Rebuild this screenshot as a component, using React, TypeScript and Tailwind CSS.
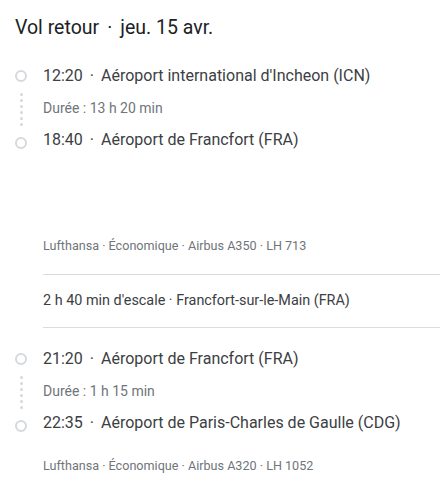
const font = { fontFamily: 'Roboto, "Noto Sans", sans-serif' };

function Circle() {
    return <div className="h-[12px] w-[12px] rounded-full border-2 border-[#d5d8dc]" />;
}

function Dots() {
    return (
        <div className="flex flex-col items-center gap-[3px] py-[5px]">
            {[0, 1, 2, 3, 4, 5].map((i) => (
                <div key={i} className="h-[3px] w-[3px] rounded-full bg-[#d5d8dc]" />
            ))}
        </div>
    );
}

type Leg = {
    depTime: string;
    depAirport: string;
    duration: string;
    arrTime: string;
    arrAirport: string;
    info: string;
    infoGap: string;
};

function Segment({ leg }: { leg: Leg }) {
    return (
        <div>
            <div className="flex">
                <div className="flex w-[28px] flex-col items-start">
                    <div className="flex h-6 items-center">
                        <Circle />
                    </div>
                    <div className="flex w-[12px] flex-1 justify-center">
                        <Dots />
                    </div>
                    <div className="flex h-6 items-center">
                        <Circle />
                    </div>
                </div>
                <div className="flex flex-col">
                    <div className="h-6 text-base leading-6 text-[#3c4043]">
                        {leg.depTime}
                        <span className="px-[7px]">·</span>
                        {leg.depAirport}
                    </div>
                    <div className="my-[10px] h-5 text-sm leading-5 text-[#70757a]">{leg.duration}</div>
                    <div className="h-6 text-base leading-6 text-[#3c4043]">
                        {leg.arrTime}
                        <span className="px-[7px]">·</span>
                        {leg.arrAirport}
                    </div>
                </div>
            </div>
            <div className={`pl-[28px] text-[12.6px] leading-4 text-[#70757a] ${leg.infoGap}`}>{leg.info}</div>
        </div>
    );
}

export default function App() {
    return (
        <div className="h-[481px] w-[440px] overflow-hidden bg-white pl-[15px]" style={font}>
            <h1 className="pt-[14px] text-[19.5px] leading-7 text-[#202124]">
                Vol retour<span className="px-[8px]">·</span>jeu. 15 avr.
            </h1>
            <div className="mt-[22px]">
                <Segment
                    leg={{
                        depTime: '12:20',
                        depAirport: "Aéroport international d'Incheon (ICN)",
                        duration: 'Durée : 13 h 20 min',
                        arrTime: '18:40',
                        arrAirport: 'Aéroport de Francfort (FRA)',
                        info: 'Lufthansa · Économique · Airbus A350 · LH 713',
                        infoGap: 'mt-[83px]',
                    }}
                />
            </div>
            <div className="ml-[28px] mt-[20px] border-y border-[#dadce0] py-[14px] text-[14.4px] leading-6 text-[#3c4043]">
                2 h 40 min d'escale · Francfort-sur-le-Main (FRA)
            </div>
            <div className="mt-[19px]">
                <Segment
                    leg={{
                        depTime: '21:20',
                        depAirport: 'Aéroport de Francfort (FRA)',
                        duration: 'Durée : 1 h 15 min',
                        arrTime: '22:35',
                        arrAirport: 'Aéroport de Paris-Charles de Gaulle (CDG)',
                        info: 'Lufthansa · Économique · Airbus A320 · LH 1052',
                        infoGap: 'mt-[20px]',
                    }}
                />
            </div>
        </div>
    );
}
